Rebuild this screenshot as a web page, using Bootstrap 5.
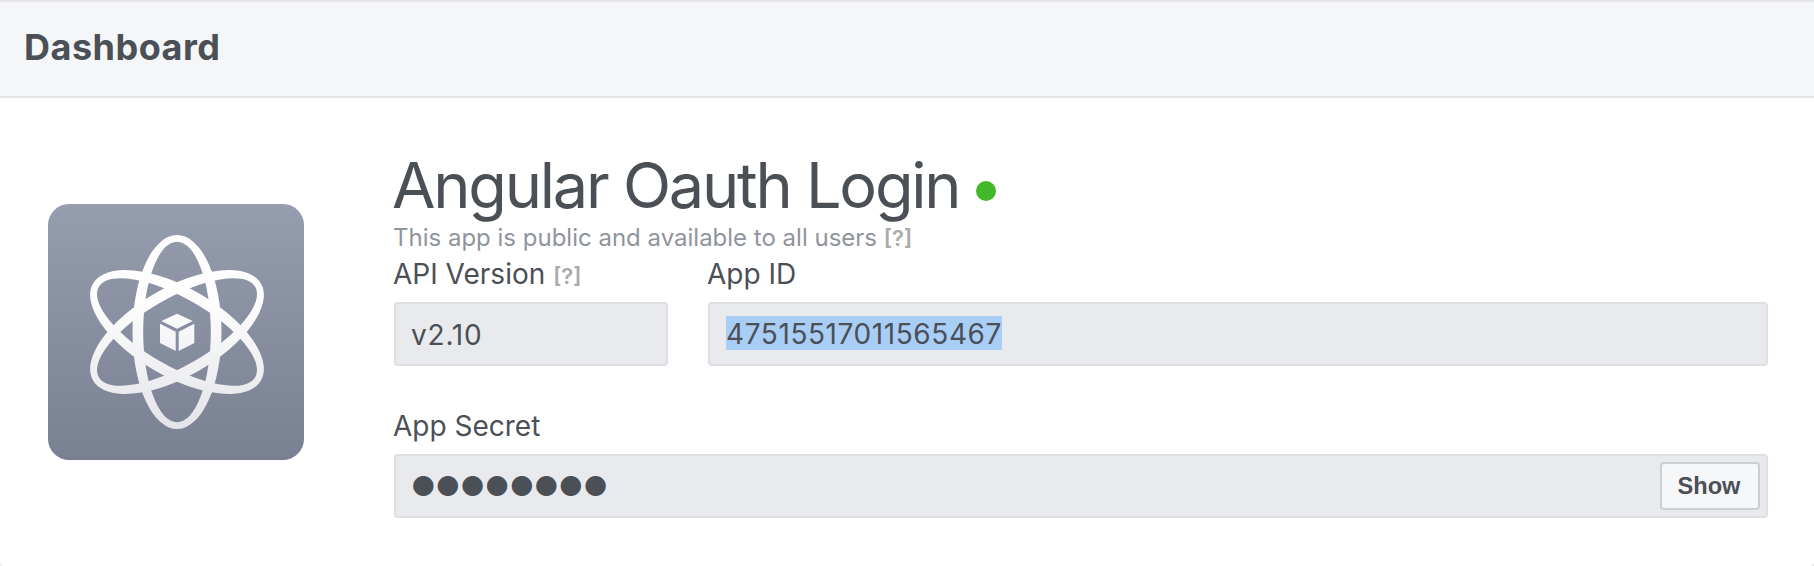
<!DOCTYPE html>
<html lang="en">
<head>
<meta charset="utf-8">
<meta name="viewport" content="width=device-width, initial-scale=1">
<title>Dashboard</title>
<link href="https://cdn.jsdelivr.net/npm/bootstrap@5.3.0/dist/css/bootstrap.min.css" rel="stylesheet">
<style>
body{font-family:Inter,"Liberation Sans",sans-serif;color:#4b4f56;background:#e5e6e8;overflow:hidden}
.panel{height:566px;border-radius:4px;border-top:2px solid #e5e5e7}
.panel-head{height:96px;background:#f5f6f8;border-bottom:2px solid #e3e4e6;border-radius:4px 0 0 0;padding:0 24px 4px}
.head-title{font-size:36px;font-weight:700;line-height:44px;letter-spacing:.5px}
.panel-main{padding:0 46px 0 48px}
.app-icon{width:256px;height:256px;margin-top:106px;margin-right:90px}
.details{padding-top:50px}
.app-name{font-size:63px;line-height:75px;font-weight:400;letter-spacing:-2.22px;margin-left:-2px}
.live-dot{width:20px;height:20px;background:#42b72a;border-radius:50%;margin:11px 0 0 17px}
.note{height:33px;font-size:24px;line-height:30px;color:#90949c;margin-left:-1px}
.hint{font-size:22px;color:#aaa;font-weight:600;line-height:1}
.field-label{height:46px;font-size:28px;line-height:36px;margin-left:-1px}
.field-box{height:64px;background:#e9eaed;border:2px solid #dcdee2;border-radius:4px;padding:0 16px;font-size:28px}
.version-col{width:274px;margin-right:40px}
.ver{letter-spacing:.8px;margin:1px 0 0 -1px}
.secret-row{margin-top:42px}
.picked{background:#a9cef6;height:34px;line-height:37px;letter-spacing:.58px;margin-top:-2px}
.dots{font-size:27px;margin:2px 0 0 -1px;letter-spacing:-.08px}
.show-btn{width:100px;height:48px;border:2px solid #ccced2;border-radius:4px;background:#f6f7f9;font:bold 23.6px "Liberation Sans",sans-serif;color:#4b4f56;margin-right:-10px;padding:0 2px 0 0}
</style>
</head>
<body>
<div class="panel bg-white">
  <header class="panel-head d-flex align-items-center"><h1 class="head-title mb-0">Dashboard</h1></header>
  <main class="panel-main d-flex align-items-start">
    <svg class="app-icon flex-shrink-0" viewBox="0 0 256 256" role="img" aria-label="App icon">
      <defs>
        <linearGradient id="tile" x1="0" y1="0" x2="0" y2="1"><stop stop-color="#959daf"/><stop offset="1" stop-color="#788091"/></linearGradient>
        <linearGradient id="glow" gradientUnits="userSpaceOnUse" x1="0" y1="31" x2="0" y2="225"><stop stop-color="#fff"/><stop offset=".35" stop-color="#fdfdfd"/><stop offset="1" stop-color="#e3e4e9"/></linearGradient>
        <mask id="atom" maskUnits="userSpaceOnUse" x="0" y="0" width="256" height="256">
          <g fill="#fff" fill-rule="evenodd">
            <path id="orbit" d="M129 31a44.5 97 0 0 1 0 194a44.5 97 0 0 1 0-194zM129 37.7a33.8 90.3 0 0 0 0 180.6a33.8 90.3 0 0 0 0-180.6z"/>
            <use href="#orbit" transform="rotate(60 129 128)"/>
            <use href="#orbit" transform="rotate(-60 129 128)"/>
            <path d="M129 109.7l15.8 7.3-15.8 7.7-15.6-7.7zM112 119.7l15.7 8v19.3l-15.7-8zM130.7 127.7l15.6-8v19.3l-15.6 8z"/>
          </g>
        </mask>
      </defs>
      <rect width="256" height="256" rx="21" fill="url(#tile)"/>
      <rect width="256" height="256" fill="url(#glow)" mask="url(#atom)"/>
    </svg>
    <section class="details flex-grow-1">
      <div class="d-flex align-items-center"><h2 class="app-name mb-0">Angular Oauth Login</h2><span class="live-dot"></span></div>
      <div class="note">This app is public and available to all users <span class="hint">[?]</span></div>
      <div class="d-flex">
        <div class="version-col">
          <div class="field-label">API Version <span class="hint">[?]</span></div>
          <div class="field-box d-flex align-items-center"><span class="ver">v2.10</span></div>
        </div>
        <div class="flex-grow-1">
          <div class="field-label">App ID</div>
          <div class="field-box d-flex align-items-center"><span class="picked">47515517011565467</span></div>
        </div>
      </div>
      <div class="secret-row">
        <div class="field-label">App Secret</div>
        <div class="field-box d-flex align-items-center justify-content-between"><span class="dots">●●●●●●●●</span><button class="show-btn" type="button">Show</button></div>
      </div>
    </section>
  </main>
</div>
<script src="https://cdn.jsdelivr.net/npm/bootstrap@5.3.0/dist/js/bootstrap.bundle.min.js"></script>
</body>
</html>
